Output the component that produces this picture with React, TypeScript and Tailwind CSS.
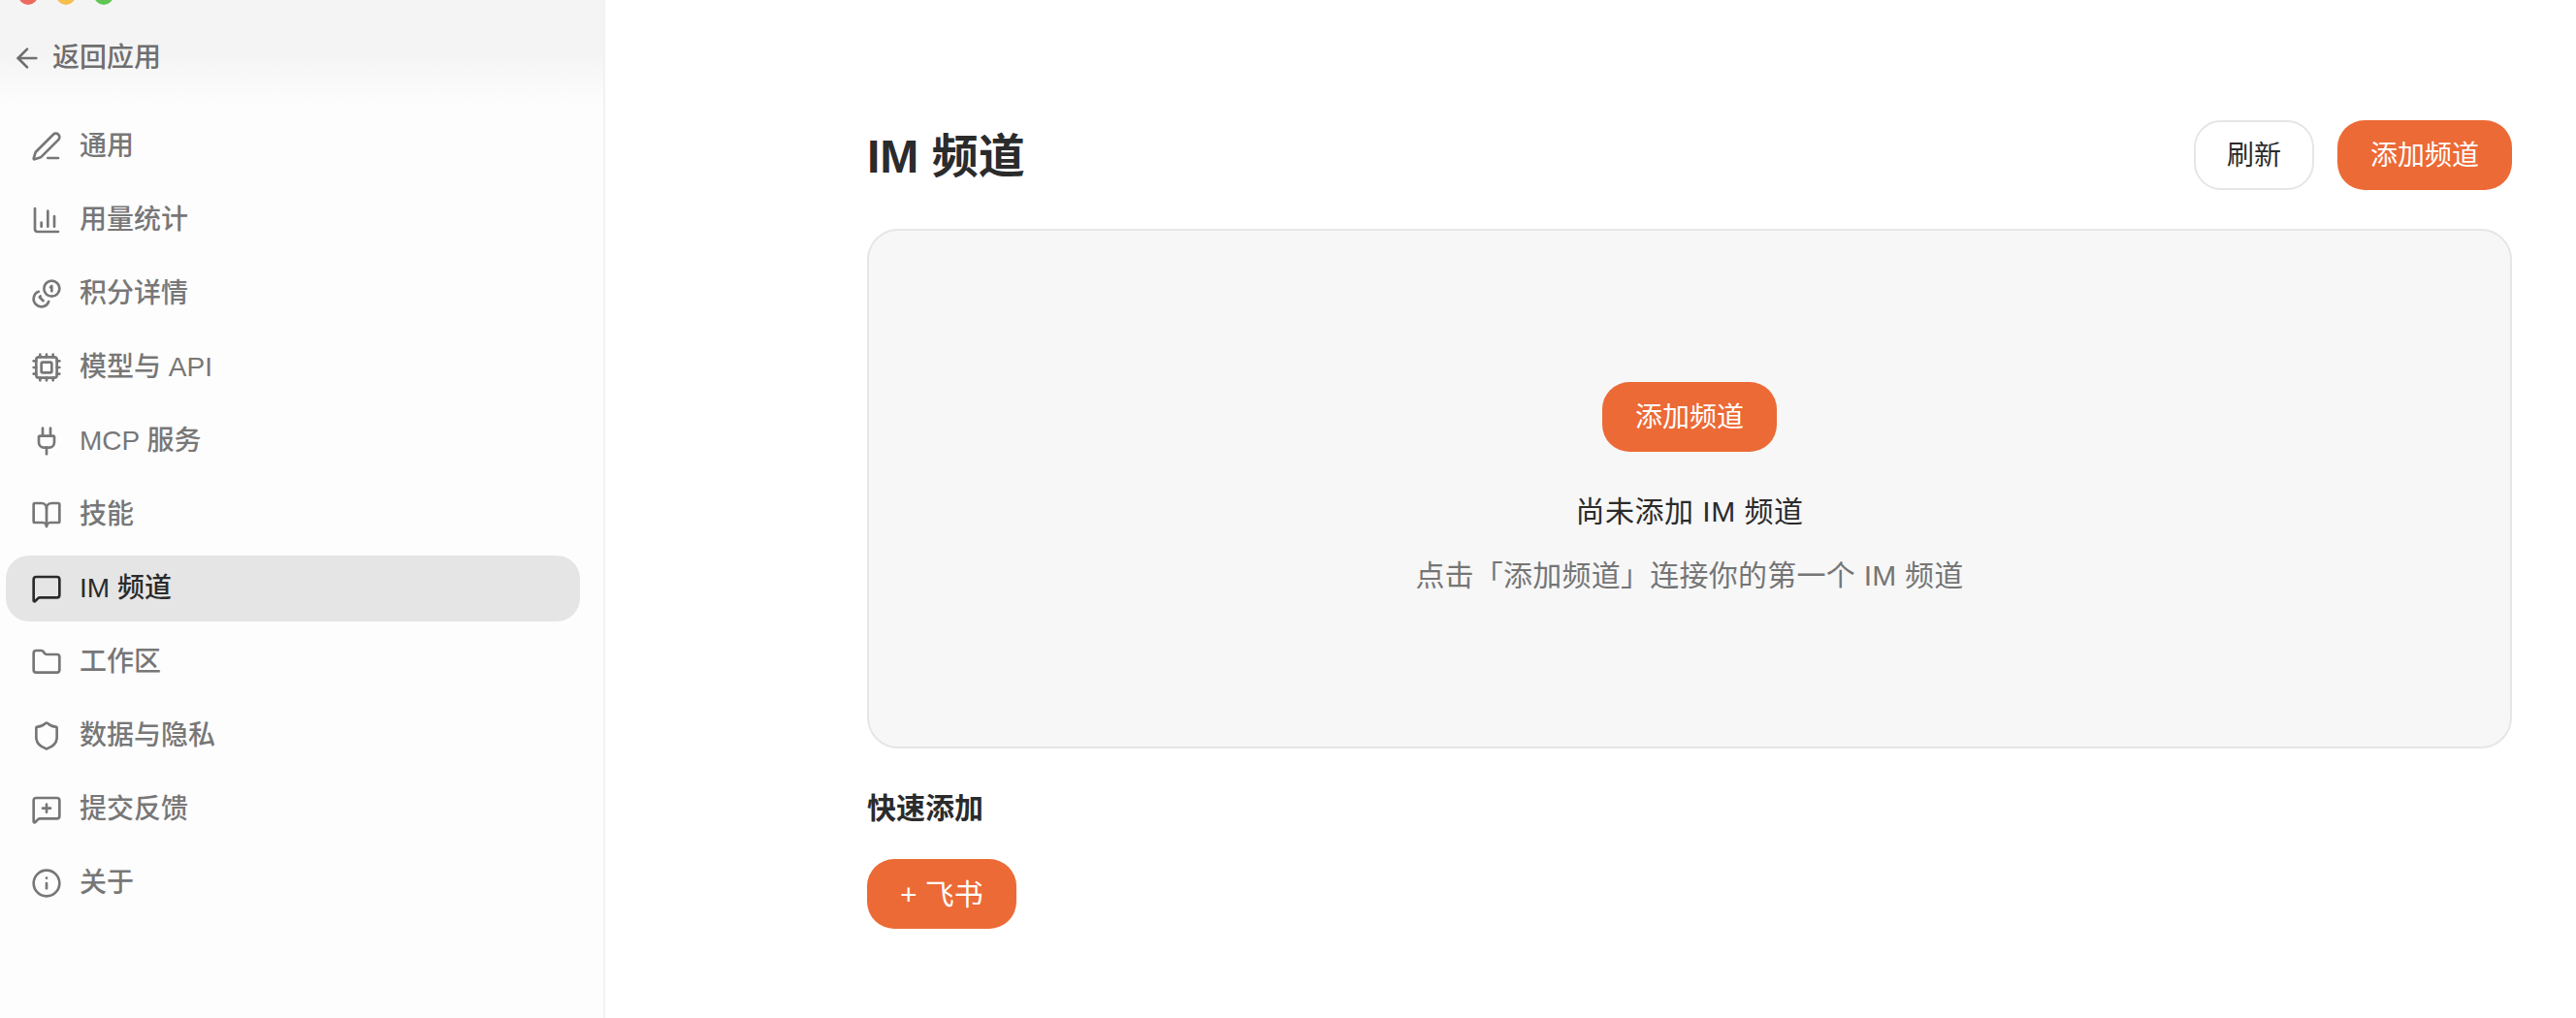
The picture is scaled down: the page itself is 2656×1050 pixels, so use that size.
import { ArrowLeft, BookOpen, ChartColumn, Cpu, Folder, Info, MessageSquare, MessageSquarePlus, PenLine, Plug, Shield } from "lucide-react"

function CoinsIcon({ size, strokeWidth, className }: { size: number; strokeWidth: number; className?: string }) {
  return (
    <svg
      width={size}
      height={size}
      viewBox="0 0 24 24"
      fill="none"
      stroke="currentColor"
      strokeWidth={strokeWidth}
      strokeLinecap="round"
      strokeLinejoin="round"
      className={className}
    >
      <circle cx="16" cy="8" r="6" />
      <path d="M5.91 10.37A6 6 0 1 0 13.66 18" />
      <path d="M15 7l1-1v4" />
      <path d="m7.29 13.88-.7.71 2.82 2.82" />
    </svg>
  )
}

const NAV_ITEMS = [
  { label: "通用", icon: PenLine },
  { label: "用量统计", icon: ChartColumn },
  { label: "积分详情", icon: CoinsIcon },
  { label: "模型与 API", icon: Cpu },
  { label: "MCP 服务", icon: Plug },
  { label: "技能", icon: BookOpen },
  { label: "IM 频道", icon: MessageSquare, active: true },
  { label: "工作区", icon: Folder },
  { label: "数据与隐私", icon: Shield },
  { label: "提交反馈", icon: MessageSquarePlus },
  { label: "关于", icon: Info },
]

function OrangeButton({ children, large }: { children: React.ReactNode; large?: boolean }) {
  return (
    <button
      className={
        large
          ? "h-[72px] pt-[1px] px-[34px] rounded-[28px] bg-[#ec6a36] text-white text-[30px] leading-[40px]"
          : "h-[72px] pt-[1px] px-[34px] rounded-[28px] bg-[#ec6a36] text-white text-[28px] leading-[40px]"
      }
    >
      {children}
    </button>
  )
}

export default function App() {
  return (
    <div className="relative flex h-[1050px] overflow-hidden bg-white text-[#2b2b2b] font-['Liberation_Sans','Noto_Sans_CJK_SC',sans-serif]">
      {/* Traffic lights */}
      <div className="absolute left-[19px] top-[-15px] flex gap-[19px]">
        <span className="w-5 h-5 rounded-full bg-[#ed6a5e]" />
        <span className="w-5 h-5 rounded-full bg-[#f5bf4f]" />
        <span className="w-5 h-5 rounded-full bg-[#61c554]" />
      </div>

      {/* Sidebar */}
      <aside className="w-[624px] shrink-0 flex flex-col bg-[#fdfdfd] border-r-2 border-[#f2f2f2]">
        <div className="h-[107px] shrink-0 pt-[40px] pl-[12px] bg-gradient-to-b from-[#f4f4f4] from-50% to-[#fdfdfd]">
          <div className="flex items-center gap-[10px] h-[40px] text-[#6f6f6f] text-[28px] font-medium">
            <ArrowLeft size={32} strokeWidth={2} className="shrink-0" />
            <span>返回应用</span>
          </div>
        </div>
        <nav className="flex flex-col gap-[8px] pt-[10px] pl-[6px] pr-[24px]">
          {NAV_ITEMS.map((item) => {
            const Icon = item.icon
            return (
              <div
                key={item.label}
                className={
                  item.active
                    ? "flex items-center gap-[18px] h-[68px] pl-[26px] rounded-[24px] bg-[#e5e5e5] text-[#2b2b2b] text-[28px] font-medium"
                    : "flex items-center gap-[18px] h-[68px] pl-[26px] rounded-[24px] text-[#777777] text-[28px] font-medium"
                }
              >
                <Icon size={32} strokeWidth={2} className="shrink-0" />
                <span>{item.label}</span>
              </div>
            )
          })}
        </nav>
      </aside>

      {/* Main */}
      <main className="flex-1 pt-[124px] pl-[270px] pr-[66px]">
        <div className="flex items-center justify-between h-[72px]">
          <h1 className="pt-[3px] text-[48px] leading-[72px] font-bold">IM 频道</h1>
          <div className="flex gap-[24px]">
            <button className="h-[72px] pt-[1px] px-[32px] rounded-[28px] bg-white border-2 border-[#e6e6e6] text-[28px] leading-[40px]">
              刷新
            </button>
            <OrangeButton>添加频道</OrangeButton>
          </div>
        </div>

        <section className="mt-[40px] h-[536px] flex flex-col items-center pt-[156px] rounded-[32px] border-2 border-[#e6e6e6] bg-[#f7f7f7]">
          <OrangeButton>添加频道</OrangeButton>
          <p className="mt-[42px] text-[30px] leading-[40px] tracking-[0.5px]">尚未添加 IM 频道</p>
          <p className="mt-[26px] text-[30px] leading-[40px] tracking-[0.25px] text-[#757575]">点击「添加频道」连接你的第一个 IM 频道</p>
        </section>

        <h2 className="mt-[42px] text-[30px] leading-[40px] font-semibold">快速添加</h2>
        <div className="mt-[32px]">
          <OrangeButton large>+ 飞书</OrangeButton>
        </div>
      </main>
    </div>
  )
}
